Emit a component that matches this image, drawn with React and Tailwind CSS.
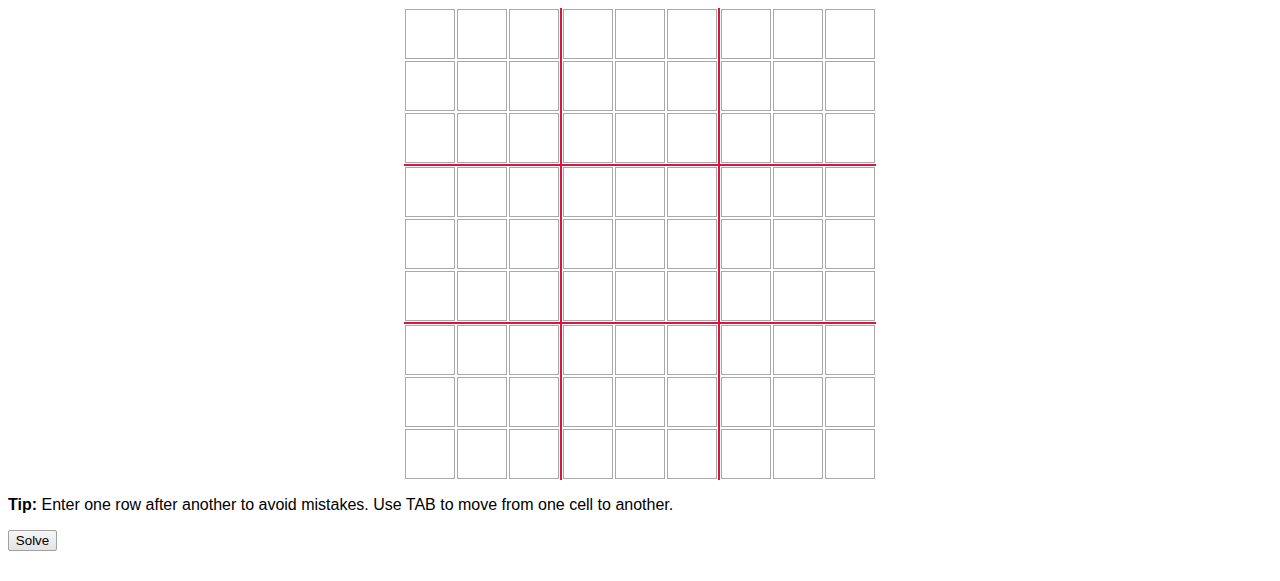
import React from "react";

const colClasses = [
  "col-start-2",
  "col-start-4",
  "col-start-6",
  "col-start-8",
  "col-start-10",
  "col-start-12",
  "col-start-[14]",
  "col-start-[16]",
  "col-start-[18]",
];
const rowClasses = [
  "row-start-2",
  "row-start-4",
  "row-start-6",
  "row-start-8",
  "row-start-10",
  "row-start-12",
  "row-start-[14]",
  "row-start-[16]",
  "row-start-[18]",
];

export default function App() {
  const cells = [];
  for (let r = 0; r < 9; r++) {
    for (let c = 0; c < 9; c++) {
      cells.push(
        <input
          key={`${r}-${c}`}
          type="text"
          maxLength={1}
          className={`${colClasses[c]} ${rowClasses[r]} w-[50px] h-[50px] border border-[#a9a9a9] bg-white text-center text-[20px] outline-none p-0 m-0`}
        />
      );
    }
  }
  return (
    <div className="bg-white min-h-[581px] p-2 font-['Liberation_Sans',Arial,sans-serif]">
      <div className="mx-auto grid w-[472px] grid-cols-[1px_50px_2px_50px_2px_50px_4px_50px_2px_50px_2px_50px_4px_50px_2px_50px_2px_50px_1px] grid-rows-[1px_50px_2px_50px_2px_50px_4px_50px_2px_50px_2px_50px_4px_50px_2px_50px_2px_50px_1px]">
        {cells}
        <div className="col-start-7 row-start-1 row-end-[-1] bg-[#dc143c] w-[2px] ml-[1px] z-10" />
        <div className="col-start-[13] row-start-1 row-end-[-1] bg-[#dc143c] w-[2px] ml-[1px] z-10" />
        <div className="row-start-7 col-start-1 col-end-[-1] bg-[#dc143c] h-[2px] mt-[1px] z-10" />
        <div className="row-start-[13] col-start-1 col-end-[-1] bg-[#dc143c] h-[2px] mt-[1px] z-10" />
      </div>
      <p className="my-4 text-[16px] leading-[18px] text-black">
        <b>Tip:</b> Enter one row after another to avoid mistakes. Use TAB to move from one cell to another.
      </p>
      <button
        type="button"
        className="block w-[49px] h-[21px] border border-[#a0a0a0] rounded-[2px] bg-gradient-to-b from-[#f6f6f6] to-[#e3e3e3] text-[13.33px] leading-none text-black"
      >
        Solve
      </button>
    </div>
  );
}
